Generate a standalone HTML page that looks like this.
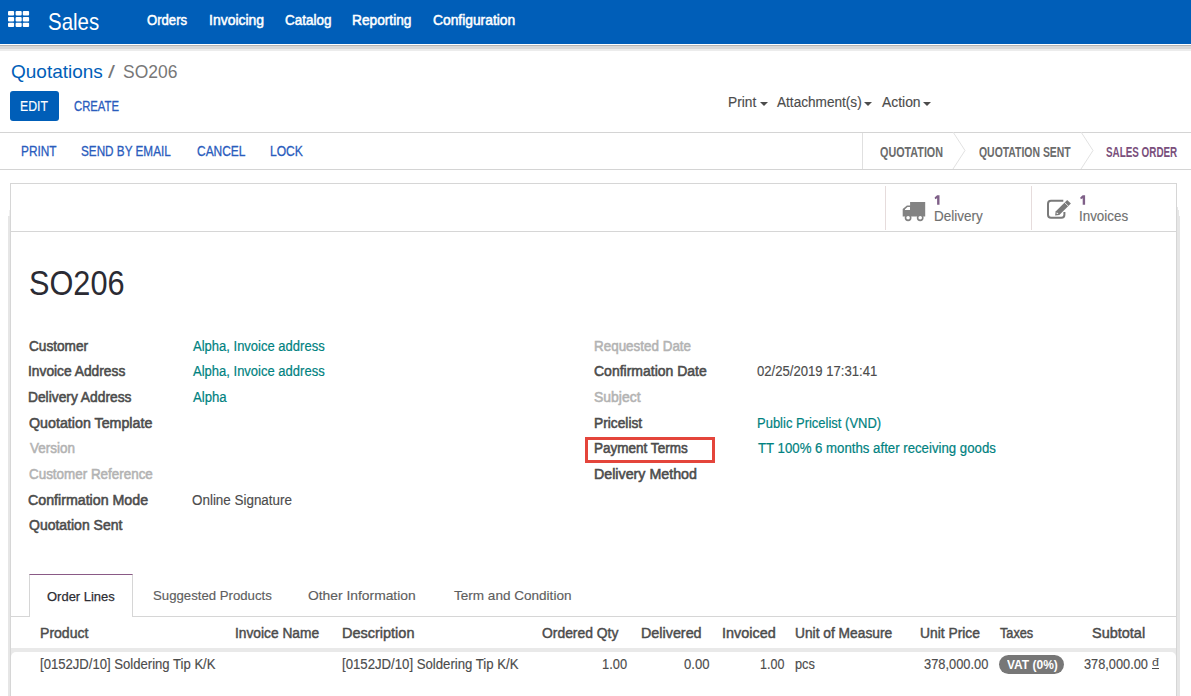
<!DOCTYPE html>
<html><head><meta charset="utf-8">
<style>
html,body{margin:0;padding:0;background:#fff;}
body{width:1191px;height:696px;overflow:hidden;position:relative;font-family:"Liberation Sans",sans-serif;}
.t{position:absolute;white-space:nowrap;transform-origin:0 0;display:block;}
.a{position:absolute;}
</style></head><body>
<!-- navbar -->
<div class="a" style="left:0;top:0;width:1191px;height:44px;background:#005eb8;"></div>
<div class="a" style="left:0;top:44px;width:1191px;height:1px;background:#ffffff;"></div>
<div class="a" style="left:0;top:45px;width:1191px;height:1px;background:#b4b4b4;"></div>
<div class="a" style="left:0;top:46px;width:1191px;height:3px;background:#d8d8d8;"></div>
<div class="a" style="left:0;top:49px;width:1191px;height:2px;background:#ececec;"></div>
<!-- apps grid icon -->
<svg class="a" style="left:0;top:0" width="40" height="44">
<g fill="#fff">
<rect x="8" y="10.9" width="6.1" height="4.7" rx="1"/><rect x="15.6" y="10.9" width="6.1" height="4.7" rx="1"/><rect x="22.8" y="10.9" width="6.3" height="4.7" rx="1"/>
<rect x="8" y="16.9" width="6.1" height="4.5" rx="1"/><rect x="15.6" y="16.9" width="6.1" height="4.5" rx="1"/><rect x="22.8" y="16.9" width="6.3" height="4.5" rx="1"/>
<rect x="8" y="22.7" width="6.1" height="4.4" rx="1"/><rect x="15.6" y="22.7" width="6.1" height="4.4" rx="1"/><rect x="22.8" y="22.7" width="6.3" height="4.4" rx="1"/>
</g></svg>
<!-- EDIT button -->
<div class="a" style="left:10px;top:91px;width:49px;height:30px;background:#005eb8;border-radius:3px;"></div>
<!-- carets -->
<div class="a" style="left:760px;top:102px;width:0;height:0;border-left:4px solid transparent;border-right:4px solid transparent;border-top:4px solid #4c4c4c;"></div>
<div class="a" style="left:864px;top:102px;width:0;height:0;border-left:4px solid transparent;border-right:4px solid transparent;border-top:4px solid #4c4c4c;"></div>
<div class="a" style="left:923px;top:102px;width:0;height:0;border-left:4px solid transparent;border-right:4px solid transparent;border-top:4px solid #4c4c4c;"></div>
<!-- control panel lines -->
<div class="a" style="left:0;top:132px;width:1191px;height:1px;background:#d4d4d4;"></div>
<div class="a" style="left:0;top:169px;width:1191px;height:1px;background:#d4d4d4;"></div>
<div class="a" style="left:862px;top:133px;width:1px;height:36px;background:#e0e0e0;"></div>
<svg class="a" style="left:940px;top:132px" width="170" height="38">
<polyline points="13,0 25,18.5 13,37" fill="none" stroke="#e2e2e2" stroke-width="1"/>
<polyline points="141,0 153,18.5 141,37" fill="none" stroke="#e2e2e2" stroke-width="1"/>
</svg>
<!-- sheet -->
<div class="a" style="left:10px;top:183px;width:1165px;height:600px;border:1px solid #d6d6d6;"></div>
<div class="a" style="left:9px;top:210px;width:1px;height:500px;background:#f0f0f0;"></div>
<div class="a" style="left:8px;top:216px;width:2px;height:500px;background:#e6e6e6;"></div>
<div class="a" style="left:1177px;top:207px;width:1px;height:500px;background:#e6e6e6;"></div>
<div class="a" style="left:1178px;top:210px;width:1px;height:500px;background:#e6e6e6;"></div>
<div class="a" style="left:1179px;top:216px;width:1px;height:500px;background:#e6e6e6;"></div>
<!-- button box -->
<div class="a" style="left:11px;top:231px;width:1165px;height:1px;background:#d6d6d6;"></div>
<div class="a" style="left:885px;top:186px;width:1px;height:44px;background:#e6dcdc;"></div>
<div class="a" style="left:1031px;top:186px;width:1px;height:44px;background:#e6dcdc;"></div>
<svg class="a" style="left:0;top:0;overflow:visible" width="1" height="1">
<path d="M937.1,195.2 H939.5 V204.7 H937.1 V198.2 L935.2,199.2 L934.6,197.6 Z" fill="#7f6088"/>
<path d="M1082.7,195.2 H1085.1 V204.7 H1082.7 V198.2 L1080.8,199.2 L1080.2,197.6 Z" fill="#7f6088"/>
</svg>
<!-- truck icon -->
<svg class="a" style="left:898px;top:195px" width="32" height="30">
<path fill="#838383" d="M12.1,7.1 H27.2 V21.6 H4.7 V14 L8.9,10.5 H12.1 Z M7,14.2 L9.5,12 H12 V15 H7 Z" fill-rule="evenodd"/>
<circle cx="10.1" cy="22.8" r="2.6" fill="#fff" stroke="#838383" stroke-width="1.6"/>
<circle cx="22.2" cy="22.8" r="2.6" fill="#fff" stroke="#838383" stroke-width="1.6"/>
</svg>
<!-- edit icon -->
<svg class="a" style="left:1042px;top:193px" width="34" height="30">
<path d="M21.3,7.8 H9 Q6,7.8 6,10.8 V21.8 Q6,24.8 9,24.8 H19.4 Q22.4,24.8 22.4,21.8 V19" fill="none" stroke="#7a7a7a" stroke-width="2"/>
<path d="M13.1,22.4 L13.6,18.4 L25.2,7.0 L28.9,10.6 L17.3,22.0 Z" fill="#7a7a7a"/>
<path d="M22.6,9.5 L26.4,13.2" stroke="#fff" stroke-width="0.8"/>
<path d="M14.8,19.2 L16.5,20.8 L14.6,21.1 Z" fill="#fff"/>
</svg>
<!-- tabs -->
<div class="a" style="left:11px;top:616px;width:1165px;height:1px;background:#d6d6d6;"></div>
<div class="a" style="left:29px;top:574px;width:102px;height:42px;background:#fff;border:1px solid #d6d6d6;border-top:1px solid #8a5a86;border-bottom:none;"></div>
<!-- table header band -->
<div class="a" style="left:11px;top:648px;width:1165px;height:12px;background:#e9e9e9;"></div>
<div class="a" style="left:11px;top:652px;width:1165px;height:60px;background:#fff;border-radius:5px 5px 0 0;"></div>
<!-- badge -->
<div class="a" style="left:999px;top:655px;width:65px;height:19px;background:#777;border-radius:10px;"></div>
<div class="a" style="left:1152px;top:668px;width:7px;height:1px;background:#4c4c4c;"></div>
<!-- red box -->
<div class="a" style="left:585px;top:437px;width:124px;height:20px;border:3px solid #e4453b;"></div>
<span class="t" id="t0" style="left:47.58px;top:9.50px;font-size:24px;line-height:24px;font-weight:normal;color:#ffffff;transform:scaleX(0.8512);">Sales</span>
<span class="t" id="t1" style="left:146.96px;top:12.90px;font-size:14px;line-height:14px;font-weight:normal;color:#ffffff;transform:scaleX(0.9365);-webkit-text-stroke:0.5px #ffffff;">Orders</span>
<span class="t" id="t2" style="left:209.06px;top:12.90px;font-size:14px;line-height:14px;font-weight:normal;color:#ffffff;transform:scaleX(0.9975);-webkit-text-stroke:0.5px #ffffff;">Invoicing</span>
<span class="t" id="t3" style="left:284.51px;top:12.90px;font-size:14px;line-height:14px;font-weight:normal;color:#ffffff;transform:scaleX(0.9612);-webkit-text-stroke:0.5px #ffffff;">Catalog</span>
<span class="t" id="t4" style="left:351.98px;top:12.90px;font-size:14px;line-height:14px;font-weight:normal;color:#ffffff;transform:scaleX(0.9795);-webkit-text-stroke:0.5px #ffffff;">Reporting</span>
<span class="t" id="t5" style="left:433.26px;top:12.90px;font-size:14px;line-height:14px;font-weight:normal;color:#ffffff;transform:scaleX(0.9865);-webkit-text-stroke:0.5px #ffffff;">Configuration</span>
<span class="t" id="t6" style="left:10.52px;top:61.55px;font-size:19px;line-height:19px;font-weight:normal;color:#005eb8;transform:scaleX(0.9995);">Quotations</span>
<span class="t" id="t7" style="left:107.64px;top:61.55px;font-size:19px;line-height:19px;font-weight:normal;color:#777777;transform:scaleX(1.3120);">/</span>
<span class="t" id="t8" style="left:122.96px;top:61.55px;font-size:19px;line-height:19px;font-weight:normal;color:#777777;transform:scaleX(0.9187);">SO206</span>
<span class="t" id="t9" style="left:20.46px;top:98.90px;font-size:14px;line-height:14px;font-weight:normal;color:#ffffff;transform:scaleX(0.8755);-webkit-text-stroke:0.15px #ffffff;">EDIT</span>
<span class="t" id="t10" style="left:74.37px;top:98.90px;font-size:14px;line-height:14px;font-weight:normal;color:#2a5cbd;transform:scaleX(0.8059);-webkit-text-stroke:0.3px #2a5cbd;">CREATE</span>
<span class="t" id="t11" style="left:727.85px;top:94.90px;font-size:14px;line-height:14px;font-weight:normal;color:#4c4c4c;transform:scaleX(0.9798);-webkit-text-stroke:0.15px #4c4c4c;">Print</span>
<span class="t" id="t12" style="left:777.05px;top:94.90px;font-size:14px;line-height:14px;font-weight:normal;color:#4c4c4c;transform:scaleX(0.9715);-webkit-text-stroke:0.15px #4c4c4c;">Attachment(s)</span>
<span class="t" id="t13" style="left:882.11px;top:94.90px;font-size:14px;line-height:14px;font-weight:normal;color:#4c4c4c;transform:scaleX(0.9910);-webkit-text-stroke:0.15px #4c4c4c;">Action</span>
<span class="t" id="t14" style="left:21.45px;top:144.00px;font-size:14px;line-height:14px;font-weight:normal;color:#2a5cbd;transform:scaleX(0.8460);-webkit-text-stroke:0.3px #2a5cbd;">PRINT</span>
<span class="t" id="t15" style="left:81.27px;top:144.00px;font-size:14px;line-height:14px;font-weight:normal;color:#2a5cbd;transform:scaleX(0.8379);-webkit-text-stroke:0.3px #2a5cbd;">SEND BY EMAIL</span>
<span class="t" id="t16" style="left:197.05px;top:144.00px;font-size:14px;line-height:14px;font-weight:normal;color:#2a5cbd;transform:scaleX(0.8537);-webkit-text-stroke:0.3px #2a5cbd;">CANCEL</span>
<span class="t" id="t17" style="left:270.30px;top:144.00px;font-size:14px;line-height:14px;font-weight:normal;color:#2a5cbd;transform:scaleX(0.8634);-webkit-text-stroke:0.3px #2a5cbd;">LOCK</span>
<span class="t" id="t18" style="left:879.52px;top:144.50px;font-size:14px;line-height:14px;font-weight:bold;color:#6b6b6b;transform:scaleX(0.7695);">QUOTATION</span>
<span class="t" id="t19" style="left:978.56px;top:144.50px;font-size:14px;line-height:14px;font-weight:bold;color:#6b6b6b;transform:scaleX(0.7448);">QUOTATION SENT</span>
<span class="t" id="t20" style="left:1106.29px;top:144.50px;font-size:14px;line-height:14px;font-weight:bold;color:#7a4f7c;transform:scaleX(0.7044);">SALES ORDER</span>
<span class="t" id="t22" style="left:933.87px;top:209.48px;font-size:14.5px;line-height:14.5px;font-weight:normal;color:#707070;transform:scaleX(0.9282);-webkit-text-stroke:0.15px #707070;">Delivery</span>
<span class="t" id="t24" style="left:1078.76px;top:209.48px;font-size:14.5px;line-height:14.5px;font-weight:normal;color:#707070;transform:scaleX(0.9227);-webkit-text-stroke:0.15px #707070;">Invoices</span>
<span class="t" id="t25" style="left:28.64px;top:265.15px;font-size:35px;line-height:35px;font-weight:normal;color:#2b2b33;transform:scaleX(0.8772);">SO206</span>
<span class="t" id="t26" style="left:28.69px;top:339.20px;font-size:14px;line-height:14px;font-weight:normal;color:#4c4c4c;transform:scaleX(0.9732);-webkit-text-stroke:0.55px #4c4c4c;">Customer</span>
<span class="t" id="t27" style="left:28.13px;top:364.00px;font-size:14px;line-height:14px;font-weight:normal;color:#4c4c4c;transform:scaleX(0.9843);-webkit-text-stroke:0.55px #4c4c4c;">Invoice Address</span>
<span class="t" id="t28" style="left:28.17px;top:390.30px;font-size:14px;line-height:14px;font-weight:normal;color:#4c4c4c;transform:scaleX(0.9848);-webkit-text-stroke:0.55px #4c4c4c;">Delivery Address</span>
<span class="t" id="t29" style="left:29.10px;top:415.80px;font-size:14px;line-height:14px;font-weight:normal;color:#4c4c4c;transform:scaleX(1.0180);-webkit-text-stroke:0.55px #4c4c4c;">Quotation Template</span>
<span class="t" id="t30" style="left:29.85px;top:440.50px;font-size:14px;line-height:14px;font-weight:normal;color:#b3b3b3;transform:scaleX(0.9617);-webkit-text-stroke:0.55px #b3b3b3;">Version</span>
<span class="t" id="t31" style="left:28.77px;top:466.60px;font-size:14px;line-height:14px;font-weight:normal;color:#b3b3b3;transform:scaleX(0.9585);-webkit-text-stroke:0.55px #b3b3b3;">Customer Reference</span>
<span class="t" id="t32" style="left:28.41px;top:492.60px;font-size:14px;line-height:14px;font-weight:normal;color:#4c4c4c;transform:scaleX(1.0153);-webkit-text-stroke:0.55px #4c4c4c;">Confirmation Mode</span>
<span class="t" id="t33" style="left:29.20px;top:518.30px;font-size:14px;line-height:14px;font-weight:normal;color:#4c4c4c;transform:scaleX(0.9995);-webkit-text-stroke:0.55px #4c4c4c;">Quotation Sent</span>
<span class="t" id="t34" style="left:192.86px;top:339.20px;font-size:14px;line-height:14px;font-weight:normal;color:#00827f;transform:scaleX(0.9295);-webkit-text-stroke:0.2px #00827f;">Alpha, Invoice address</span>
<span class="t" id="t35" style="left:192.86px;top:364.00px;font-size:14px;line-height:14px;font-weight:normal;color:#00827f;transform:scaleX(0.9295);-webkit-text-stroke:0.2px #00827f;">Alpha, Invoice address</span>
<span class="t" id="t36" style="left:193.28px;top:390.30px;font-size:14px;line-height:14px;font-weight:normal;color:#00827f;transform:scaleX(0.9392);-webkit-text-stroke:0.2px #00827f;">Alpha</span>
<span class="t" id="t37" style="left:192.33px;top:492.60px;font-size:14px;line-height:14px;font-weight:normal;color:#4c4c4c;transform:scaleX(0.9584);-webkit-text-stroke:0.15px #4c4c4c;">Online Signature</span>
<span class="t" id="t38" style="left:594.19px;top:339.00px;font-size:14px;line-height:14px;font-weight:normal;color:#b3b3b3;transform:scaleX(0.9593);-webkit-text-stroke:0.55px #b3b3b3;">Requested Date</span>
<span class="t" id="t39" style="left:593.59px;top:363.80px;font-size:14px;line-height:14px;font-weight:normal;color:#4c4c4c;transform:scaleX(0.9994);-webkit-text-stroke:0.55px #4c4c4c;">Confirmation Date</span>
<span class="t" id="t40" style="left:594.13px;top:389.60px;font-size:14px;line-height:14px;font-weight:normal;color:#b3b3b3;transform:scaleX(0.9974);-webkit-text-stroke:0.55px #b3b3b3;">Subject</span>
<span class="t" id="t41" style="left:594.18px;top:415.70px;font-size:14px;line-height:14px;font-weight:normal;color:#4c4c4c;transform:scaleX(0.9828);-webkit-text-stroke:0.55px #4c4c4c;">Pricelist</span>
<span class="t" id="t42" style="left:594.19px;top:441.00px;font-size:14px;line-height:14px;font-weight:normal;color:#4c4c4c;transform:scaleX(0.9658);-webkit-text-stroke:0.55px #4c4c4c;">Payment Terms</span>
<span class="t" id="t43" style="left:593.89px;top:466.80px;font-size:14px;line-height:14px;font-weight:normal;color:#4c4c4c;transform:scaleX(1.0173);-webkit-text-stroke:0.55px #4c4c4c;">Delivery Method</span>
<span class="t" id="t44" style="left:757.20px;top:363.80px;font-size:14px;line-height:14px;font-weight:normal;color:#4c4c4c;transform:scaleX(0.9366);-webkit-text-stroke:0.15px #4c4c4c;">02/25/2019 17:31:41</span>
<span class="t" id="t45" style="left:757.35px;top:415.70px;font-size:14px;line-height:14px;font-weight:normal;color:#00827f;transform:scaleX(0.9277);-webkit-text-stroke:0.2px #00827f;">Public Pricelist (VND)</span>
<span class="t" id="t46" style="left:757.70px;top:441.00px;font-size:14px;line-height:14px;font-weight:normal;color:#00827f;transform:scaleX(0.9443);-webkit-text-stroke:0.2px #00827f;">TT 100% 6 months after receiving goods</span>
<span class="t" id="t47" style="left:47.01px;top:589.62px;font-size:13.5px;line-height:13.5px;font-weight:normal;color:#2d2d33;transform:scaleX(0.9611);-webkit-text-stroke:0.25px #2d2d33;">Order Lines</span>
<span class="t" id="t48" style="left:152.84px;top:589.23px;font-size:13.5px;line-height:13.5px;font-weight:normal;color:#5e5e5e;transform:scaleX(0.9767);-webkit-text-stroke:0.15px #5e5e5e;">Suggested Products</span>
<span class="t" id="t49" style="left:308.18px;top:589.23px;font-size:13.5px;line-height:13.5px;font-weight:normal;color:#5e5e5e;transform:scaleX(1.0250);-webkit-text-stroke:0.15px #5e5e5e;">Other Information</span>
<span class="t" id="t50" style="left:453.50px;top:589.23px;font-size:13.5px;line-height:13.5px;font-weight:normal;color:#5e5e5e;transform:scaleX(1.0034);-webkit-text-stroke:0.15px #5e5e5e;">Term and Condition</span>
<span class="t" id="t51" style="left:40.32px;top:626.40px;font-size:14px;line-height:14px;font-weight:normal;color:#4c4c4c;transform:scaleX(1.0040);-webkit-text-stroke:0.45px #4c4c4c;">Product</span>
<span class="t" id="t52" style="left:234.77px;top:626.40px;font-size:14px;line-height:14px;font-weight:normal;color:#4c4c4c;transform:scaleX(0.9826);-webkit-text-stroke:0.45px #4c4c4c;">Invoice Name</span>
<span class="t" id="t53" style="left:342.41px;top:626.40px;font-size:14px;line-height:14px;font-weight:normal;color:#4c4c4c;transform:scaleX(1.0346);-webkit-text-stroke:0.45px #4c4c4c;">Description</span>
<span class="t" id="t54" style="left:541.77px;top:626.40px;font-size:14px;line-height:14px;font-weight:normal;color:#4c4c4c;transform:scaleX(0.9917);-webkit-text-stroke:0.45px #4c4c4c;">Ordered Qty</span>
<span class="t" id="t55" style="left:640.58px;top:626.40px;font-size:14px;line-height:14px;font-weight:normal;color:#4c4c4c;transform:scaleX(1.0246);-webkit-text-stroke:0.45px #4c4c4c;">Delivered</span>
<span class="t" id="t56" style="left:721.55px;top:626.40px;font-size:14px;line-height:14px;font-weight:normal;color:#4c4c4c;transform:scaleX(1.0291);-webkit-text-stroke:0.45px #4c4c4c;">Invoiced</span>
<span class="t" id="t57" style="left:795.34px;top:626.40px;font-size:14px;line-height:14px;font-weight:normal;color:#4c4c4c;transform:scaleX(0.9835);-webkit-text-stroke:0.45px #4c4c4c;">Unit of Measure</span>
<span class="t" id="t58" style="left:920.29px;top:626.40px;font-size:14px;line-height:14px;font-weight:normal;color:#4c4c4c;transform:scaleX(0.9882);-webkit-text-stroke:0.45px #4c4c4c;">Unit Price</span>
<span class="t" id="t59" style="left:1000.18px;top:626.40px;font-size:14px;line-height:14px;font-weight:normal;color:#4c4c4c;transform:scaleX(0.9078);-webkit-text-stroke:0.45px #4c4c4c;">Taxes</span>
<span class="t" id="t60" style="left:1091.72px;top:626.40px;font-size:14px;line-height:14px;font-weight:normal;color:#4c4c4c;transform:scaleX(1.0339);-webkit-text-stroke:0.45px #4c4c4c;">Subtotal</span>
<span class="t" id="t61" style="left:40.36px;top:657.40px;font-size:14px;line-height:14px;font-weight:normal;color:#4c4c4c;transform:scaleX(0.9357);-webkit-text-stroke:0.15px #4c4c4c;">[0152JD/10] Soldering Tip K/K</span>
<span class="t" id="t62" style="left:342.03px;top:657.40px;font-size:14px;line-height:14px;font-weight:normal;color:#4c4c4c;transform:scaleX(0.9412);-webkit-text-stroke:0.15px #4c4c4c;">[0152JD/10] Soldering Tip K/K</span>
<span class="t" id="t63" style="left:601.54px;top:657.40px;font-size:14px;line-height:14px;font-weight:normal;color:#4c4c4c;transform:scaleX(0.9189);-webkit-text-stroke:0.15px #4c4c4c;">1.00</span>
<span class="t" id="t64" style="left:683.88px;top:657.40px;font-size:14px;line-height:14px;font-weight:normal;color:#4c4c4c;transform:scaleX(0.9330);-webkit-text-stroke:0.15px #4c4c4c;">0.00</span>
<span class="t" id="t65" style="left:759.81px;top:657.40px;font-size:14px;line-height:14px;font-weight:normal;color:#4c4c4c;transform:scaleX(0.8932);-webkit-text-stroke:0.15px #4c4c4c;">1.00</span>
<span class="t" id="t66" style="left:795.19px;top:657.40px;font-size:14px;line-height:14px;font-weight:normal;color:#4c4c4c;transform:scaleX(0.9130);-webkit-text-stroke:0.15px #4c4c4c;">pcs</span>
<span class="t" id="t67" style="left:923.83px;top:657.40px;font-size:14px;line-height:14px;font-weight:normal;color:#4c4c4c;transform:scaleX(0.9180);-webkit-text-stroke:0.15px #4c4c4c;">378,000.00</span>
<span class="t" id="t68" style="left:1006.51px;top:658.60px;font-size:12px;line-height:12px;font-weight:bold;color:#ffffff;transform:scaleX(0.9977);">VAT (0%)</span>
<span class="t" id="t69" style="left:1083.71px;top:657.40px;font-size:14px;line-height:14px;font-weight:normal;color:#4c4c4c;transform:scaleX(0.9121);-webkit-text-stroke:0.15px #4c4c4c;">378,000.00</span>
<span class="t" id="t70" style="left:1152.21px;top:658.10px;font-size:10px;line-height:10px;font-weight:normal;color:#4c4c4c;transform:scaleX(1.2434);">đ</span>
</body></html>
